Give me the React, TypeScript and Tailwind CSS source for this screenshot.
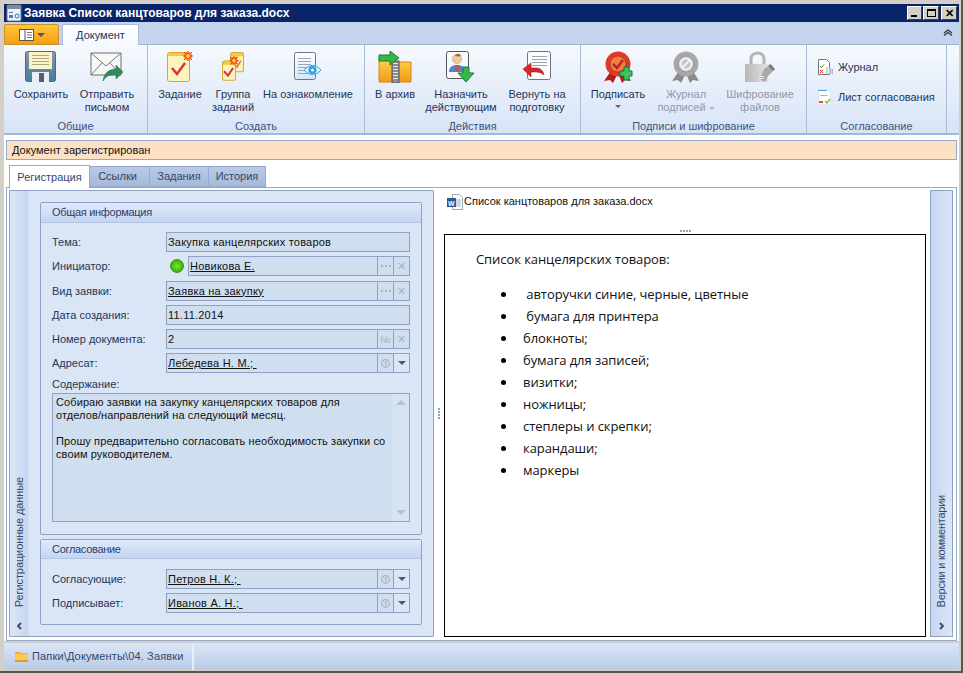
import React from "react";

const Lines = ({ x, y, w, n, step = 4, c = "#9aa6b8" }: { x: number; y: number; w: number; n: number; step?: number; c?: string }) => (
  <>
    {Array.from({ length: n }).map((_, i) => (
      <rect key={i} x={x} y={y + i * step} width={w} height={1} fill={c} />
    ))}
  </>
);

const Star = ({ x, y, r = 4 }: { x: number; y: number; r?: number }) => (
  <g>
    <circle cx={x} cy={y} r={r} fill="#ff7a1a" />
    <path d={`M${x - r - 1} ${y}H${x + r + 1}M${x} ${y - r - 1}V${y + r + 1}M${x - r} ${y - r}L${x + r} ${y + r}M${x - r} ${y + r}L${x + r} ${y - r}`} stroke="#e8401a" strokeWidth="1" />
    <circle cx={x} cy={y} r={r / 2} fill="#ffd23a" />
  </g>
);

const Note = ({ x, y, w, h }: { x: number; y: number; w: number; h: number }) => (
  <g>
    <rect x={x + 0.5} y={y + 0.5} width={w} height={h} rx="2" fill="#fdf3bd" stroke="#d4a63a" />
    <rect x={x + 1} y={y + 1} width={w - 1} height={3} fill="#f7c93c" />
  </g>
);

const Save = () => (
  <svg width="32" height="32" viewBox="0 0 32 32">
    <defs>
      <linearGradient id="sv" x1="0" y1="0" x2="0" y2="1"><stop offset="0" stopColor="#8b98a8" /><stop offset="1" stopColor="#3f7f9f" /></linearGradient>
    </defs>
    <rect x="0.5" y="0.5" width="30" height="30" rx="2" fill="url(#sv)" stroke="#56677a" />
    <rect x="4" y="1" width="23" height="17" fill="#fbf3c4" />
    <Lines x={7} y={4} w={17} n={4} step={3} c="#a9a88a" />
    <rect x="7" y="21" width="17" height="10" fill="#e8eef2" />
    <rect x="14" y="22" width="5" height="9" fill="#54606c" />
  </svg>
);

const Mail = () => (
  <svg width="34" height="32" viewBox="0 0 34 32">
    <path d="M1 2h30v22H1z" fill="#f8f8f8" stroke="#6d6d6d" />
    <path d="M1 2l15 13L31 2M1 24l11-12M31 24L20 12" fill="none" stroke="#777" />
    <path d="M13 30c1-8 6-12 13-12v-4l7 7-7 7v-4c-6-1-10 1-13 6z" fill="#2f8a5e" stroke="#1f6b48" strokeWidth="0.5" />
  </svg>
);

const Task = () => (
  <svg width="28" height="32" viewBox="0 0 28 32">
    <Note x={1} y={1} w={22} h={29} />
    <path d="M6 17l5 6 8-11" fill="none" stroke="#d8343a" strokeWidth="2.5" />
    <Star x={22} y={5} />
  </svg>
);

const Group = () => (
  <svg width="24" height="30" viewBox="0 0 24 30" className="w-[24px] h-[32px]" preserveAspectRatio="none">
    <Note x={9} y={1} w={13} h={18} />
    <path d="M13 12l3 3 4-6" fill="none" stroke="#d8802a" strokeWidth="1.5" />
    <Note x={1} y={9} w={13} h={18} />
    <path d="M3 19l4 4 5-7" fill="none" stroke="#d8343a" strokeWidth="2" />
    <Star x={13} y={9} r={3.5} />
  </svg>
);

const Review = () => (
  <svg width="30" height="32" viewBox="0 0 30 32">
    <defs><linearGradient id="rv" x1="0" y1="0" x2="0" y2="1"><stop offset="0" stopColor="#fff" /><stop offset="1" stopColor="#d2e7f6" /></linearGradient></defs>
    <rect x="1.5" y="1.5" width="21" height="27" rx="2" fill="url(#rv)" stroke="#6c7480" />
    <Lines x={5} y={7} w={13} n={6} step={3} />
    <path d="M11 19c5-6 12-6 17 0-5 6-12 6-17 0z" fill="#d9f0ff" stroke="#3aa2df" />
    <circle cx="19.5" cy="19" r="4" fill="#2c9fe6" />
    <circle cx="19.5" cy="19" r="1.5" fill="#fff" />
  </svg>
);

const Archive = () => (
  <svg width="34" height="32" viewBox="0 0 34 32">
    <defs><linearGradient id="ar" x1="0" y1="0" x2="0" y2="1"><stop offset="0" stopColor="#ffd44f" /><stop offset="1" stopColor="#f09a16" /></linearGradient></defs>
    <path d="M1 7h12v4h20v20H1z" fill="url(#ar)" stroke="#d6860f" />
    <rect x="14" y="10" width="7" height="22" fill="#8d8d8d" stroke="#555" />
    <Lines x={15} y={12} w={5} n={6} step={3} c="#e4e4e4" />
    <path d="M1 3h11V-1l9 7-9 7V9H1z" transform="translate(0 1)" fill="#3ab54a" stroke="#1e7d33" />
  </svg>
);

const Assign = () => (
  <svg width="30" height="32" viewBox="0 0 30 32">
    <rect x="0.5" y="0.5" width="22" height="27" rx="2" fill="#f4f9fd" stroke="#555" />
    <circle cx="11" cy="8" r="4.5" fill="#f3c9a0" stroke="#b58860" strokeWidth="0.5" />
    <path d="M9 5c1-3 5-3 6 0-2 1-4 0-6 0z" fill="#9a6a30" />
    <path d="M3 21c0-5 3-7 8-7s8 2 8 7z" fill="#4f86c8" />
    <path d="M10 14h2l1 5-2 2-2-2z" fill="#e54a2c" />
    <path d="M17 16h6v6h5l-8 9-8-9h5z" fill="#3ab54a" stroke="#1e7d33" />
  </svg>
);

const Back = () => (
  <svg width="28" height="32" viewBox="0 0 28 32">
    <rect x="4.5" y="0.5" width="23" height="28" rx="2" fill="#fafbfc" stroke="#6c7480" />
    <Lines x={9} y={5} w={15} n={4} step={3} />
    <path d="M8 13v5h5c4 0 7 2 8 7-2-2-5-3-8-3H8v5L0 19z" transform="translate(0 -1)" fill="#d8252c" stroke="#8d1117" strokeWidth="0.5" />
  </svg>
);

const Rosette = ({ gray }: { gray?: boolean }) => {
  const a = gray ? "#a8a8a8" : "#dd3a2a";
  const b = gray ? "#8a8a8a" : "#b01d1d";
  const c = gray ? "#c4c4c4" : "#f08040";
  return (
    <g>
      <path d="M8 20L1 30l6-1 3 3 5-10zM22 20l6 10-6-1-3 3-4-10z" fill={b} />
      <circle cx="15" cy="13" r="12.5" fill={a} />
      <circle cx="15" cy="13" r="8" fill={c} stroke={b} strokeWidth="0.7" />
    </g>
  );
};

const Sign = () => (
  <svg width="30" height="32" viewBox="0 0 30 32">
    <Rosette />
    <path d="M10 13l4 4 6-8" fill="none" stroke="#b8282a" strokeWidth="2.5" />
    <path d="M18 19h4v-4h5v4h3v5h-3v4h-5v-4h-4z" transform="translate(-1 1)" fill="#3fc45a" stroke="#107a2e" />
  </svg>
);

const Gray = () => (
  <svg width="30" height="32" viewBox="0 0 30 32">
    <Rosette gray />
    <circle cx="15" cy="13" r="5.5" fill="none" stroke="#f2f2f2" strokeWidth="2" />
    <path d="M11 17l8-8" stroke="#f2f2f2" strokeWidth="2" />
  </svg>
);

const Lock = () => (
  <svg width="32" height="32" viewBox="0 0 32 32">
    <defs><linearGradient id="lk" x1="0" y1="0" x2="1" y2="0"><stop offset="0" stopColor="#b8b8b8" /><stop offset="1" stopColor="#e0e0e0" /></linearGradient></defs>
    <path d="M7 13V8c0-8 13-8 13 0v5" fill="none" stroke="#b4b4b4" strokeWidth="3" />
    <rect x="1" y="13" width="23" height="18" fill="url(#lk)" />
    <path d="M20 18l7-5 4 5-7 7-3 6-5-3z" fill="#a9a9a9" />
    <path d="M25 14l5 5" stroke="#6f6f6f" strokeWidth="2" />
    <Lines x={15} y={25} w={5} n={2} step={2} c="#ededed" />
  </svg>
);

const SmallJournal = () => (
  <svg width="15" height="16" viewBox="0 0 15 16">
    <path d="M.5.5h8l3 3v12H.5z" fill="#fff" stroke="#777" />
    <path d="M2 7l1.500 1.500L6 5.500" fill="none" stroke="#2a9a3a" />
    <path d="M2 11l3 3M5 11l-3 3" stroke="#d8252c" />
    <rect x="8" y="8" width="2" height="7" fill="#c9d9a8" />
    <rect x="11" y="9" width="2" height="6" fill="#9fc6e6" />
    <rect x="13.500" y="10" width="1.500" height="5" fill="#c9a9d6" />
  </svg>
);

const SmallSheet = () => (
  <svg width="13" height="16" viewBox="0 0 13 16">
    <path d="M.5.5h9l3 3v12H.5z" fill="#fff" stroke="#dfe6f0" />
    <rect x="0" y="1" width="9" height="1" fill="#5c9ad6" />
    <rect x="2" y="6" width="8" height="1" fill="#a8b8cc" />
    <rect x="1" y="12" width="4" height="2" fill="#e04a4a" />
    <path d="M7 12l2 2 3-4" fill="none" stroke="#7dbb2a" strokeWidth="1.3" />
  </svg>
);

const FolderSmall = () => (
  <svg width="13" height="11" viewBox="0 0 13 11">
    <path d="M0 1h5l1 1h7v9H0z" fill="#f6ae2c" />
    <rect x="0" y="3" width="13" height="8" fill="#fbc954" />
    <rect x="0" y="9" width="13" height="2" fill="#ec9a1a" />
  </svg>
);

const Coin = () => (
  <svg width="9" height="9" viewBox="0 0 9 9">
    <circle cx="4.500" cy="4.500" r="3.800" fill="none" stroke="#a9b3c2" strokeWidth="1.200" />
    <path d="M3 3h3L4 6h2" fill="none" stroke="#a9b3c2" />
  </svg>
);

const DownTri = () => (
  <svg width="8" height="4" viewBox="0 0 8 4"><path d="M0 0h8L4 4z" fill="#4a5a72" /></svg>
);

const MiniTri = ({ c }: { c: string }) => (
  <svg width="6" height="3" viewBox="0 0 6 3" className="inline-block align-middle"><path d="M0 0h6L3 3z" fill={c} /></svg>
);

const Chevron = ({ right }: { right?: boolean }) => (
  <svg width="6" height="8" viewBox="0 0 6 8" className={right ? "rotate-180" : ""}>
    <path d="M5 1L2 4l3 3" fill="none" stroke="#33486a" strokeWidth="1.800" />
  </svg>
);

const Btn = ({ w, icon, lines, muted, arrow }: { w: string; icon: React.ReactNode; lines: React.ReactNode[]; muted?: boolean; arrow?: React.ReactNode }) => (
  <div className={`${w} flex flex-col items-center shrink-0`}>
    <div className="h-[32px] flex items-center justify-center">{icon}</div>
    <div className={`mt-[5px] text-center leading-[13px] whitespace-nowrap ${muted ? "text-[#8f99a8]" : "text-[#1f3558]"}`}>
      {lines.map((l, i) => <div key={i}>{l}</div>)}
      {arrow}
    </div>
  </div>
);

const Group2 = ({ w, title, children }: { w: string; title: string; children: React.ReactNode }) => (
  <div className={`${w} shrink-0 h-full flex flex-col border-r border-[#a9bcd8]`}>
    <div className="h-[75px] pt-[6px] flex">{children}</div>
    <div className="text-center text-[#3d5478] leading-[13px] pt-[1px]">{title}</div>
  </div>
);

const Field = ({ label, children }: { label: string; children: React.ReactNode }) => (
  <div className="h-[20px] flex items-center">
    <div className="w-[125px] shrink-0 pl-[11px] text-[#22375a]">{label}</div>
    <div className="w-[244px] h-full flex">{children}</div>
  </div>
);

const Box = ({ children, link }: { children: React.ReactNode; link?: boolean }) => (
  <div className={`flex-1 min-w-0 bg-[#cfdfef] border border-[#8da2c4] flex items-center px-[1px] text-[#111] tracking-[0.22px] whitespace-pre ${link ? "underline" : ""}`}>{children}</div>
);

const Side = ({ children, dark }: { children: React.ReactNode; dark?: boolean }) => (
  <div className={`w-[16px] shrink-0 border border-l-0 border-[#8da2c4] flex items-center justify-center text-[#a9b3c2] ${dark ? "bg-[#dbe5f5]" : "bg-[#cfdfef]"}`}>{children}</div>
);

const Picker = () => (
  <>
    <Side><Coin /></Side>
    <Side dark><DownTri /></Side>
  </>
);

const Dots = () => (
  <div className="flex items-center gap-[1px] text-[0px]">
    <span className="w-[2px] h-[2px] bg-[#a9b3c2]" />
    <span className="w-[2px] h-[2px] bg-[#a9b3c2] mx-[1px]" />
    <span className="w-[2px] h-[2px] bg-[#a9b3c2]" />
  </div>
);

const XIcon = () => <span className="text-[11px] leading-none text-[#a9b3c2]">✕</span>;

const docItems = ["\u00a0авторучки синие, черные, цветные", "\u00a0бумага для принтера", "блокноты;", "бумага для записей;", "визитки;", "ножницы;", "степлеры и скрепки;", "карандаши;", "маркеры"];

export default function App() {
  return (
    <div className="w-[963px] h-[673px] overflow-hidden bg-[#d4d0c8] pt-[4px] pl-[4px] pr-[2px] pb-[1px] border-r-2 border-b-2 border-[#555] flex flex-col text-[11px] leading-[13px] font-['Liberation_Sans',sans-serif]">
      {/* Title bar */}
      <div className="h-[18px] shrink-0 bg-[#0a246a] flex items-center pr-[2px]">
        <svg width="18" height="18" viewBox="0 0 18 18" className="shrink-0 ml-[2px]">
          <rect x="1" y="1" width="14" height="16" rx="1" fill="#eef3fa" stroke="#6c7480" />
          <rect x="1" y="1" width="14" height="4" fill="#7d8aa0" />
          <rect x="3" y="8" width="4" height="1" fill="#4a7ab8" />
          <rect x="3" y="11" width="4" height="3" fill="#4a7ab8" />
          <circle cx="11" cy="12" r="2" fill="none" stroke="#2c6fc0" />
        </svg>
        <div className="text-white font-bold text-[12px] whitespace-nowrap">Заявка Список канцтоваров для заказа.docx</div>
        <div className="ml-auto flex gap-[1px]">
          <div className="w-[15px] h-[14px] bg-[#d4d0c8] border border-t-white border-l-white border-r-[#404040] border-b-[#404040] flex items-center justify-center">
            <span className="w-[6px] h-[2px] bg-black mt-[6px] mr-[2px]" />
          </div>
          <div className="w-[16px] h-[14px] bg-[#d4d0c8] border border-t-white border-l-white border-r-[#404040] border-b-[#404040] flex items-center justify-center">
            <span className="w-[9px] h-[8px] border border-black border-t-2" />
          </div>
          <div className="w-[16px] h-[14px] ml-[1px] bg-[#d4d0c8] border border-t-white border-l-white border-r-[#404040] border-b-[#404040] flex items-center justify-center">
            <span className="text-[11px] font-bold leading-none text-black">✕</span>
          </div>
        </div>
      </div>

      {/* Tab row */}
      <div className="h-[23px] shrink-0 bg-[#c4d4ee] border-b border-[#9db1d0] flex items-end relative">
        <div className="w-[55px] h-[21px] -mb-px rounded-t-[2px] bg-gradient-to-b from-[#ffc53a] to-[#f59e0b] border border-[#c9902a] flex items-center justify-center gap-[3px]">
          <svg width="15" height="12" viewBox="0 0 15 12"><rect x=".5" y=".5" width="14" height="11" fill="#fff" stroke="#555" /><path d="M6 1v10" stroke="#555" /><path d="M8 3.500h5M8 6h5M8 8.500h5" stroke="#777" /></svg>
          <DownTri />
        </div>
        <div className="ml-[3px] w-[77px] h-[21px] -mb-px border border-b-0 border-[#a9bcd8] rounded-t-[2px] bg-gradient-to-b from-white to-[#f4f8fe] flex items-center justify-center text-[#1f3558]">Документ</div>
        <svg width="10" height="7" viewBox="0 0 10 7" className="absolute right-[6px] top-[7px]"><path d="M1 4l4-3 4 3M1 6.500l4-3 4 3" fill="none" stroke="#334" strokeWidth="1.200" /></svg>
      </div>

      {/* Ribbon */}
      <div className="h-[90px] shrink-0 bg-gradient-to-b from-[#f6f9fe] to-[#d7e3f6] border-b-2 border-[#a3b7d6] flex">
        <Group2 w="w-[144px]" title="Общие">
          <div className="pl-[4px] flex">
            <Btn w="w-[66px]" icon={<Save />} lines={["Сохранить"]} />
            <Btn w="w-[66px]" icon={<Mail />} lines={["Отправить", "письмом"]} />
          </div>
        </Group2>
        <Group2 w="w-[217px]" title="Создать">
          <div className="pl-[4px] flex">
            <Btn w="w-[56px]" icon={<Task />} lines={["Задание"]} />
            <Btn w="w-[50px]" icon={<Group />} lines={["Группа", "заданий"]} />
            <Btn w="w-[100px]" icon={<Review />} lines={["На ознакомление"]} />
          </div>
        </Group2>
        <Group2 w="w-[216px]" title="Действия">
          <div className="pl-[4px] flex">
            <Btn w="w-[52px]" icon={<Archive />} lines={["В архив"]} />
            <Btn w="w-[80px]" icon={<Assign />} lines={["Назначить", "действующим"]} />
            <Btn w="w-[72px]" icon={<Back />} lines={["Вернуть на", "подготовку"]} />
          </div>
        </Group2>
        <Group2 w="w-[226px]" title="Подписи и шифрование">
          <div className="pl-[7px] flex">
            <Btn w="w-[60px]" icon={<Sign />} lines={["Подписать"]} arrow={<div className="flex justify-center mt-[4px]"><MiniTri c="#5c6470" /></div>} />
            <Btn w="w-[76px]" muted icon={<Gray />} lines={["Журнал", <>подписей <MiniTri c="#a9b3c2" /></>]} />
            <Btn w="w-[72px]" muted icon={<Lock />} lines={["Шифрование", "файлов"]} />
          </div>
        </Group2>
        <Group2 w="w-[140px]" title="Согласование">
          <div className="pl-[11px] pt-[8px] flex flex-col gap-[14px] text-[#1f3558]">
            <div className="h-[16px] flex items-center gap-[5px]"><SmallJournal /><span>Журнал</span></div>
            <div className="h-[16px] flex items-center gap-[7px]"><SmallSheet /><span>Лист согласования</span></div>
          </div>
        </Group2>
      </div>

      {/* Content */}
      <div className="flex-1 min-h-0 bg-white flex flex-col pl-[2px] pr-[2px] pt-[5px]">
        <div className="h-[20px] shrink-0 bg-[#fde1c4] border border-[#94a9cb] flex items-center pl-[5px] text-[#111]">Документ зарегистрирован</div>
        <div className="h-[23px] mt-[4px] shrink-0 flex items-end pl-[3px] text-[#33486a]">
          <div className="w-[81px] h-[23px] -mb-px z-10 bg-white border border-b-0 border-[#94a9cb] flex items-center justify-center">Регистрация</div>
          <div className="w-[60px] h-[21px] pr-[4px] bg-gradient-to-b from-[#b9cae4] to-[#a5bad9] border border-l-0 border-[#94a9cb] flex items-center justify-center">Ссылки</div>
          <div className="w-[59px] h-[21px] bg-gradient-to-b from-[#b9cae4] to-[#a5bad9] border border-l-0 border-[#94a9cb] flex items-center justify-center">Задания</div>
          <div className="w-[57px] h-[21px] bg-gradient-to-b from-[#b9cae4] to-[#a5bad9] border border-l-0 border-[#94a9cb] flex items-center justify-center">История</div>
        </div>
        <div className="flex-1 min-h-0 border border-[#94a9cb] flex pt-[1px] pb-[3px] pl-[2px] pr-[2px]">
          {/* Left panel */}
          <div className="w-[425px] shrink-0 mt-[1px] border border-[#8da2c4] rounded-[1px] bg-[#dae5f6] flex">
            <div className="w-[19px] shrink-0 bg-gradient-to-r from-[#dbe6f7] to-[#c6d6f0] border-r border-[#cfdcf1] flex flex-col items-center justify-end">
              <div className="[writing-mode:vertical-rl] rotate-180 text-[#33486a] mb-[15px] whitespace-nowrap tracking-[-0.1px]">Регистрационные данные</div>
              <div className="mb-[6px] h-[8px] flex"><Chevron /></div>
            </div>
            <div className="flex-1 pl-[11px] pr-[11px] pt-[11px] flex flex-col">
              <div className="h-[333px] shrink-0 border border-[#8da2c4] rounded-[2px] flex flex-col">
                <div className="h-[20px] shrink-0 bg-gradient-to-b from-[#dfe9fb] to-[#c5d6f1] border-b border-[#b3c5e1] flex items-center pl-[11px] text-[#2c4163] tracking-[-0.3px]">Общая информация</div>
                <div className="pt-[9px] flex flex-col gap-[4px]">
                  <Field label="Тема:"><Box>Закупка канцелярских товаров</Box></Field>
                  <Field label="Инициатор:">
                    <div className="w-[22px] shrink-0 flex items-center justify-center">
                      <span className="w-[14px] h-[14px] rounded-full bg-[radial-gradient(circle_at_50%_50%,#7fe23a_0%,#4ec512_50%,#2c8a10_100%)] border border-[#3a9a1a]" />
                    </div>
                    <Box link>Новикова Е.</Box>
                    <Side><Dots /></Side>
                    <Side><XIcon /></Side>
                  </Field>
                </div>
                <div className="mt-[5px] flex flex-col gap-[4px]">
                  <Field label="Вид заявки:">
                    <Box link>Заявка на закупку</Box>
                    <Side><Dots /></Side>
                    <Side><XIcon /></Side>
                  </Field>
                  <Field label="Дата создания:"><Box>11.11.2014</Box></Field>
                  <Field label="Номер документа:">
                    <Box>2</Box>
                    <Side><span className="text-[10px]">№</span></Side>
                    <Side><XIcon /></Side>
                  </Field>
                  <Field label="Адресат:"><Box link>{"Лебедева Н. М.; "}</Box><Picker /></Field>
                </div>
                <div className="pl-[11px] mt-[5px] leading-[13px] text-[#22375a]">Содержание:</div>
                <div className="ml-[11px] mt-[2px] w-[358px] h-[129px] bg-[#cfdfef] border border-[#8da2c4] flex text-[#111]">
                  <div className="flex-1 pl-[3px] pt-[2px] leading-[13px] tracking-[0.1px] whitespace-nowrap">
                    <div>Собираю заявки на закупку канцелярских товаров для</div>
                    <div>отделов/направлений на следующий месяц.</div>
                    <div className="h-[13px]" />
                    <div>Прошу предварительно согласовать необходимость закупки со</div>
                    <div>своим руководителем.</div>
                  </div>
                  <div className="w-[17px] shrink-0 bg-[#d5e3f2] flex flex-col justify-between items-center py-[6px]">
                    <svg width="10" height="5" viewBox="0 0 10 5"><path d="M0 5h10L5 0z" fill="#b4c1d4" /></svg>
                    <svg width="10" height="5" viewBox="0 0 10 5"><path d="M0 0h10L5 5z" fill="#b4c1d4" /></svg>
                  </div>
                </div>
              </div>
              <div className="h-[86px] mt-[4px] shrink-0 border border-[#8da2c4] rounded-[2px] flex flex-col">
                <div className="h-[19px] shrink-0 bg-gradient-to-b from-[#dfe9fb] to-[#c5d6f1] border-b border-[#b3c5e1] flex items-center pl-[11px] text-[#2c4163] tracking-[-0.3px]">Согласование</div>
                <div className="pt-[10px] flex flex-col gap-[4px]">
                  <Field label="Согласующие:"><Box link>{"Петров Н. К.; "}</Box><Picker /></Field>
                  <Field label="Подписывает:"><Box link>{"Иванов А. Н.; "}</Box><Picker /></Field>
                </div>
              </div>
            </div>
          </div>
          {/* Splitter */}
          <div className="w-[10px] shrink-0 flex flex-col items-center justify-center gap-[1px]">
            {[0, 1, 2, 3].map((i) => <span key={i} className="w-[2px] h-[2px] bg-[#8da2c4]" />)}
          </div>
          {/* Doc */}
          <div className="w-[482px] shrink-0 flex flex-col">
            <div className="h-[27px] shrink-0 flex items-center gap-[1px] pl-[3px] pb-[2px] text-[#111]">
              <svg width="16" height="16" viewBox="0 0 16 16">
                <path d="M5.500.5h7l3 3v12h-10z" fill="#fff" stroke="#9aa6b8" />
                <path d="M8 6h6M8 8h6M8 10h6M8 12h6" stroke="#a9b3c2" />
                <rect x="0" y="4" width="9" height="9" fill="#2b579a" />
                <text x="1" y="11.500" fontSize="7" fontWeight="bold" fill="#fff" fontFamily="Liberation Sans">W</text>
              </svg>
              <span>Список канцтоваров для заказа.docx</span>
            </div>
            <div className="h-[18px] shrink-0 flex justify-center items-end pb-[2px] gap-[1px]">
              {[0, 1, 2, 3].map((i) => <span key={i} className="w-[2px] h-[2px] bg-[#8da2c4]" />)}
            </div>
            <div className="flex-1 min-h-0 border border-black bg-white pt-[13px] pl-[31px] text-[13px] leading-[22px] text-[#111] tracking-[-0.07px] font-['Open_Sans',sans-serif]">
              <div>Список канцелярских товаров:</div>
              <ul className="mt-[13px] pl-[25px]">
                {docItems.map((t) => (
                  <li key={t} className="h-[22px] flex items-center whitespace-pre">
                    <span className="w-[5px] h-[5px] rounded-full bg-black shrink-0 mr-[17px]" />
                    <span>{t}</span>
                  </li>
                ))}
              </ul>
            </div>
          </div>
          {/* Right strip */}
          <div className="w-[23px] shrink-0 ml-[4px] mt-[1px] border border-[#8da2c4] bg-gradient-to-r from-[#c6d6f0] to-[#dbe6f7] flex flex-col items-center justify-end">
            <div className="[writing-mode:vertical-rl] rotate-180 text-[#33486a] mb-[15px] whitespace-nowrap tracking-[-0.25px]">Версии и комментарии</div>
            <div className="mb-[6px] h-[8px] flex"><Chevron right /></div>
          </div>
        </div>
      </div>

      {/* Status */}
      <div className="h-[27px] shrink-0 mt-[2px] bg-gradient-to-b from-[#dbe6f7] to-[#b9cbe6] flex items-center">
        <div className="w-[190px] h-full border-r-2 border-[#e8eef8] pl-[11px] flex items-center gap-[4px] text-[#33486a] tracking-[0.15px]">
          <FolderSmall />
          <span>Папки\Документы\04. Заявки</span>
        </div>
      </div>
    </div>
  );
}
